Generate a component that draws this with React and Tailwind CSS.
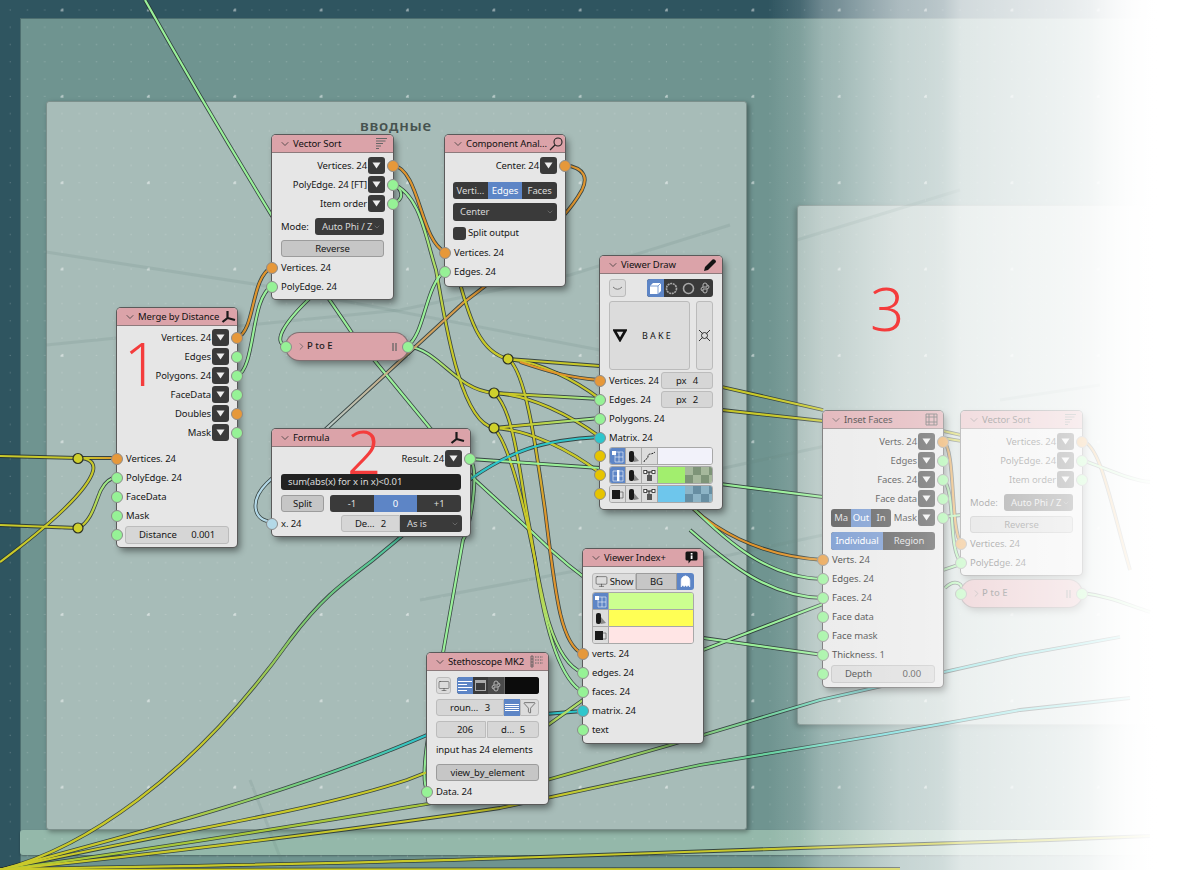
import React from 'react';
import { Monitor, Filter, Ghost, ChevronDown, ChevronRight } from 'lucide-react';

// Wire stroke colours
const G = '#9af09a';
const Y = '#c9c92a';
const O = '#e0952e';
const C = '#2fc4c8';

const wires = [
  // left side
  { d: 'M0,456 L78,458', c: Y },
  { d: 'M78,458 L117,458', c: 'url(#yo1)' },
  { d: 'M78,458 C90,458 95,463 93,471 C88,490 50,525 0,562', c: Y },
  { d: 'M0,525 L78,528', c: Y },
  { d: 'M78,528 C92,522 96,500 101,490 C105,482 110,478 117,477', c: 'url(#yg1)' },
  // merge -> vector sort
  { d: 'M237,338 C256,330 250,278 272,267', c: O },
  { d: 'M237,376 C256,368 250,298 272,286', c: G },
  // long green from the top
  { d: 'M145,0 C190,80 250,180 272,216 C300,258 330,300 352,333 L430,428 L473,478 L533,533 C570,570 640,625 703,638 L823,655', c: G },
  // vector sort outs
  { d: 'M393,203 C404,200 404,190 393,184', c: G },
  { d: 'M286,346 C272,342 285,322 310,298 L393,203', c: G },
  { d: 'M393,165 C420,170 420,240 445,252', c: O },
  { d: 'M393,184 C420,195 425,235 436,270 C445,320 460,422 494,428', c: 'url(#gy1)' },
  { d: 'M407,346 C425,335 425,285 445,271', c: G },
  { d: 'M407,346 C440,350 455,390 494,393', c: 'url(#gy2)' },
  // component analyzer center -> formula x
  { d: 'M565,165 C585,168 588,178 582,190 C560,230 500,275 463,303 L327,428 L267,483 C250,500 252,520 272,522', c: 'url(#ob1)' },
  // yellow to reroutes
  { d: 'M459,280 C470,320 480,352 508,359', c: Y },
  { d: 'M508,359 L600,366', c: Y },
  { d: 'M508,359 C540,362 575,380 600,399', c: Y },
  { d: 'M520,362 C550,372 570,378 600,380', c: O },
  { d: 'M508,359 C525,370 535,440 545,510 C555,590 560,645 583,654', c: 'url(#yo2)' },
  { d: 'M494,393 L600,399', c: 'url(#yg2)' },
  { d: 'M494,393 C530,395 570,415 600,437', c: Y },
  { d: 'M494,393 C515,410 520,480 530,530 C540,590 550,660 583,673', c: 'url(#yg3)' },
  { d: 'M494,428 L600,418', c: 'url(#yg2)' },
  { d: 'M494,428 C530,430 570,450 600,473', c: Y },
  { d: 'M494,428 C510,445 525,510 535,560 C545,630 560,680 583,692', c: 'url(#yg3)' },
  // formula result
  { d: 'M470,459 L600,468', c: G },
  { d: 'M470,459 C480,470 470,530 463,540 L443,653 C435,700 418,775 427,790', c: G },
  // fan from the lower left
  { d: 'M0,870 C80,850 190,780 290,640 C320,600 340,585 373,560 L472,478 C510,452 540,440 600,437', c: 'url(#yc1)' },
  { d: 'M0,870 C150,830 300,790 427,735 L520,716 L583,711', c: 'url(#yc2)' },
  { d: 'M0,870 C150,835 300,815 407,780 L548,725 L583,700 L703,650 L823,604', c: 'url(#yg4)' },
  { d: 'M0,870 C150,850 300,825 427,804 L547,780 L670,745 L820,700 L1020,655 L1120,637', c: 'url(#yc3)' },
  { d: 'M0,870 C150,855 350,830 500,808 L700,765 L880,735 L1020,710 L1130,698', c: 'url(#yc4)' },
  { d: 'M0,869 C200,866 400,862 540,857 L800,848 L1050,840 L1150,836', c: Y },
  { d: 'M0,870 L900,869', c: Y },
  // viewer draw -> inset faces
  { d: 'M640,350 L722,387 L823,410', c: Y },
  { d: 'M640,400 L722,410 L823,421', c: Y },
  { d: 'M640,476 L720,484 L823,497', c: G },
  { d: 'M680,495 C710,530 760,556 823,560', c: O },
  { d: 'M690,505 C730,545 770,578 823,579', c: G },
  { d: 'M690,530 C730,565 770,597 823,598', c: G },
  // inset faces -> faded vector sort
  { d: 'M943,441 C956,448 950,530 961,543', c: O },
  { d: 'M943,479 C956,490 948,550 961,562', c: G },
  { d: 'M943,431 L961,435', c: Y },
  { d: 'M943,438 L961,441', c: Y },
  { d: 'M943,517 L961,515', c: G },
  { d: 'M943,570 L961,564', c: G },
  { d: 'M945,588 C955,578 965,584 961,592', c: G },
  { d: 'M1082,593 C1110,596 1130,606 1150,612', c: G },
  { d: 'M1082,441 C1100,444 1110,500 1130,570', c: O },
  { d: 'M1082,460 C1110,470 1130,480 1150,482', c: G },
];

// Faint old wires lying on the frames
const ghosts = [
  'M46,252 L260,285 L600,350',
  'M46,345 L400,310 L570,275 L730,225',
  'M420,600 L580,570 L730,555 L823,535',
  'M250,780 L285,870',
  'M600,490 L715,470 L830,445',
  'M1000,400 L1100,385',
  'M797,240 L960,190',
];

const Sock = ({ c = 'g', side = 'l' }) => {
  const colors = {
    g: 'bg-[#96f296]',
    o: 'bg-[#e6983a]',
    c: 'bg-[#2fc6cc]',
    y: 'bg-[#e6c400]',
    b: 'bg-[#b4d9e8]',
  };
  const pos = side === 'l' ? 'left-[-6px]' : 'right-[-6px]';
  return <span className={`absolute top-[3.5px] z-10 w-[12px] h-[12px] rounded-full border border-[#8c8c8c] ${pos} ${colors[c]}`} />;
};

const Drop = () => (
  <span className="w-[17px] h-[17px] rounded-[3px] bg-[#3a3a3a] flex items-center justify-center shrink-0">
    <svg width="9" height="7" viewBox="0 0 9 7"><path d="M0.5 0.5 H8.5 L4.5 6.5 Z" fill="#eee" /></svg>
  </span>
);

const Out = ({ label, c = 'g', drop = true }) => (
  <div className="relative h-[19px] flex items-center justify-end gap-[1px] pr-2">
    <span>{label}</span>
    {drop && <Drop />}
    <Sock c={c} side="r" />
  </div>
);

const In = ({ label, c = 'g' }) => (
  <div className="relative h-[19px] flex items-center pl-[9px]">
    <Sock c={c} />
    <span>{label}</span>
  </div>
);

const Node = ({ pos, title, icon, children }) => (
  <div className={`absolute isolate ${pos} bg-[#e6e6e6] rounded-[4px] ring-1 ring-[#5a5a5a] shadow-[3px_4px_7px_rgba(0,0,0,0.45)] text-[9.5px] tracking-[-0.1px] leading-none whitespace-nowrap text-[#161616]`}>
    <div className="h-[18px] bg-[#dba3a9] border-b border-[#8d7a7c] rounded-t-[4px] flex items-center pl-[7px] pr-[5px] gap-[2px] text-[#111]">
      <ChevronDown size={12} strokeWidth={1.5} className="shrink-0 text-[#333]" />
      <span className="flex-1 whitespace-nowrap">{title}</span>
      {icon}
    </div>
    <div className="pt-[1px] pb-[1px]">{children}</div>
  </div>
);

const Tripod = () => (
  <svg width="15" height="14" viewBox="0 0 15 14" className="shrink-0">
    <path d="M6.5 1 V8 L1.5 12 M6.5 8 L14 10" stroke="#1a1a1a" strokeWidth="2.2" fill="none" />
  </svg>
);

const SortIcon = () => (
  <svg width="13" height="13" viewBox="0 0 13 13" className="shrink-0">
    <path d="M1 1.5 H12 M1 4 H10.5 M1 6.5 H8 M1 9 H6 M1 11.5 H4" stroke="#666" strokeWidth="1" />
  </svg>
);

const PencilIcon = () => (
  <svg width="14" height="14" viewBox="0 0 14 14" className="shrink-0">
    <path d="M1 13 L2 9 L9.5 1.5 Q10.5 0.8 11.5 1.5 L12.8 2.8 Q13.3 3.6 12.5 4.5 L5 12 Z" fill="#141414" />
  </svg>
);

const InfoIcon = () => (
  <svg width="13" height="13" viewBox="0 0 13 13" className="shrink-0">
    <path d="M2 0.5 H11 Q12.5 0.5 12.5 2 V8 Q12.5 9.5 11 9.5 H6 L3.5 12.5 V9.5 H2 Q0.5 9.5 0.5 8 V2 Q0.5 0.5 2 0.5 Z" fill="#141414" />
    <rect x="5.7" y="2" width="1.8" height="1.6" fill="#fff" />
    <rect x="5.7" y="4.4" width="1.8" height="3.6" fill="#fff" />
  </svg>
);

const ScopeIcon = () => (
  <svg width="13" height="13" viewBox="0 0 13 13" className="shrink-0">
    <path d="M1 1 H3 V12 H1 Z" stroke="#555" strokeWidth="0.8" fill="none" />
    <path d="M1 4 H3 M1 7 H3 M1 10 H3" stroke="#555" strokeWidth="0.8" />
    <path d="M5 2 H13 M5 5 H13 M5 8 H13" stroke="#666" strokeWidth="1" strokeDasharray="1.5 1" />
  </svg>
);

const InsetIcon = () => (
  <svg width="13" height="13" viewBox="0 0 13 13" className="shrink-0">
    <path d="M1 1 H12 V12 H1 Z M4 1 V12 M9 1 V12 M1 4 H12 M1 9 H12" stroke="#4a4a4a" strokeWidth="0.9" fill="none" />
  </svg>
);

const LensIcon = () => (
  <svg width="14" height="14" viewBox="0 0 14 14" className="shrink-0">
    <circle cx="9" cy="5" r="4" stroke="#222" strokeWidth="1.1" fill="none" />
    <path d="M6 8 L1 13" stroke="#222" strokeWidth="1.3" />
  </svg>
);

const DarkSeg = ({ items, active, className }) => (
  <div className={`flex rounded-[3px] overflow-hidden bg-[#3a3a3a] text-[#dcdcdc] ${className}`}>
    {items.map((t, i) => (
      <span key={t} className={`flex-1 flex items-center justify-center whitespace-nowrap ${i === active ? 'bg-[#5d85c6] text-white' : ''}`}>{t}</span>
    ))}
  </div>
);

const DarkSelect = ({ label, className }) => (
  <div className={`flex items-center justify-between rounded-[3px] bg-[#3a3a3a] text-[#d8d8d8] pl-[7px] pr-[3px] ${className}`}>
    <span className="whitespace-nowrap">{label}</span>
    <ChevronDown size={8} strokeWidth={1.2} className="text-[#aaa] shrink-0" />
  </div>
);

const VectorSort = ({ pos, poly }) => (
  <Node pos={pos} title="Vector Sort" icon={<SortIcon />}>
    <div className="pt-[2px]">
      <Out label="Vertices. 24" c="o" />
      <Out label={poly} />
      <Out label="Item order" />
      <div className="flex items-center h-[17px] mt-[5px] px-[9px] justify-between">
        <span>Mode:</span>
        <DarkSelect label="Auto Phi / Z" className="w-[69px] h-[17px]" />
      </div>
      <div className="mx-[9px] mt-[5px] h-[17px] rounded-[3px] bg-[#c6c6c6] border border-[#9c9c9c] flex items-center justify-center">Reverse</div>
      <div className="mt-[1px] pb-[2px]">
        <In label="Vertices. 24" c="o" />
        <In label="PolyEdge. 24" />
      </div>
    </div>
  </Node>
);

const Pill = ({ pos }) => (
  <div className={`absolute isolate ${pos} h-[27px] rounded-[14px] bg-[#dba3a9] ring-1 ring-[#7f6f71] shadow-[3px_4px_7px_rgba(0,0,0,0.4)] flex items-center pl-[10px] pr-[11px] text-[9.5px] font-medium text-[#1c1c1c]`}>
    <span className="absolute left-[-6px] top-[7.5px] z-10 w-[12px] h-[12px] rounded-full border border-[#8c8c8c] bg-[#96f296]" />
    <ChevronRight size={11} strokeWidth={1.5} className="text-[#555]" />
    <span className="flex-1">P to E</span>
    <span className="flex gap-[1px]">
      <i className="w-[2px] h-[8px] bg-[#8f7a7c]" />
      <i className="w-[2px] h-[8px] bg-[#8f7a7c]" />
    </span>
    <span className="absolute right-[-6px] top-[7.5px] z-10 w-[12px] h-[12px] rounded-full border border-[#8c8c8c] bg-[#96f296]" />
  </div>
);

const Field = ({ a, b, className }) => (
  <div className={`flex items-center justify-between rounded-[3px] bg-[#d6d6d6] border border-[#bcbcbc] ${className}`}>
    <span>{a}</span>
    <span>{b}</span>
  </div>
);

const Cell = ({ active, children }) => (
  <span className={`w-[16px] shrink-0 flex items-center justify-center border-r border-[#a8a8a8] ${active ? 'bg-[#5d85c6]' : 'bg-[#dcdcdc]'}`}>
    {children}
  </span>
);

const VertGlyph = ({ fg = '#fff' }) => (
  <svg width="13" height="13" viewBox="0 0 13 13">
    <path d="M4 2 H12 V12 H4 Z M4 7 H12 M8 2 V12" stroke={fg} strokeWidth="0.8" fill="none" opacity="0.7" />
    <rect x="1" y="1" width="4" height="4" fill={fg} />
  </svg>
);
const EdgeGlyph = () => (
  <svg width="13" height="13" viewBox="0 0 13 13">
    <path d="M2 2 H12 V12 H2 Z M2 7 H12" stroke="#fff" strokeWidth="0.8" fill="none" opacity="0.7" />
    <rect x="6" y="1" width="2.4" height="11" fill="#fff" />
  </svg>
);
const FaceGlyph = () => (
  <svg width="13" height="13" viewBox="0 0 13 13">
    <rect x="1" y="2" width="8" height="9" fill="#1a1a1a" />
    <path d="M9 4 H12 V10 H9" stroke="#666" strokeWidth="0.8" fill="none" />
  </svg>
);
const PaintGlyph = () => (
  <svg width="13" height="13" viewBox="0 0 13 13">
    <rect x="2" y="1" width="5" height="11" rx="2" fill="#1a1a1a" />
    <path d="M7 5 L12 11 L7 12 Z" fill="#888" />
  </svg>
);
const CurveGlyph = () => (
  <svg width="13" height="13" viewBox="0 0 13 13">
    <path d="M1 12 C2 8 5 10 5 6 C5 3 9 5 12 2" stroke="#222" strokeWidth="1" strokeDasharray="2 1" fill="none" />
  </svg>
);
const TreeGlyph = () => (
  <svg width="13" height="13" viewBox="0 0 13 13">
    <path d="M2 3 H11 M6 3 V12" stroke="#222" strokeWidth="1" fill="none" />
    <rect x="0.8" y="1.5" width="3" height="3" fill="#fff" stroke="#222" strokeWidth="0.8" />
    <rect x="9" y="1.5" width="3" height="3" fill="#fff" stroke="#222" strokeWidth="0.8" />
    <rect x="4" y="6" width="5" height="6" fill="#555" />
  </svg>
);
const PyGlyph = () => (
  <svg width="12" height="12" viewBox="0 0 12 12">
    <path d="M4 5 V3 Q4 1 6 1 Q8 1 8 3 V5 H5 Q2 5 2 7 Q2 9 4 9 M8 7 V9 Q8 11 6 11 Q4 11 4 9 V7 H7 Q10 7 10 5 Q10 3 8 3" stroke="#b5b5b5" strokeWidth="1" fill="none" />
  </svg>
);
const Ring = ({ dash }) => (
  <svg width="13" height="13" viewBox="0 0 13 13">
    <circle cx="6.5" cy="6.5" r="5" stroke="#a8a8a8" strokeWidth="1.6" fill="none" strokeDasharray={dash} />
  </svg>
);

const ColorRow = ({ first, middle, last, children }) => (
  <div className="relative h-[18px] mx-[9px] flex rounded-[3px] overflow-hidden border border-[#a8a8a8]">
    <Cell active={first[1]}>{first[0]}</Cell>
    <Cell>{middle}</Cell>
    <Cell>{last}</Cell>
    {children}
  </div>
);

const SideSock = ({ c, t }) => <span className={`absolute left-[-6px] ${t} z-10 w-[12px] h-[12px] rounded-full border border-[#8c8c8c] ${c}`} />;

const ViewerDraw = () => (
  <Node pos="left-[600px] top-[256px] w-[122px]" title="Viewer Draw" icon={<PencilIcon />}>
    <div className="px-[9px] pt-[4px] flex justify-between items-start">
      <span className="w-[17px] h-[18px] rounded-[3px] bg-[#dcdcdc] border border-[#bbb] flex items-center justify-center">
        <svg width="11" height="5" viewBox="0 0 11 5"><path d="M1 1 Q5.5 5.5 10 1" stroke="#777" strokeWidth="1" fill="none" /></svg>
      </span>
      <div className="flex w-[66px] h-[18px] rounded-[3px] overflow-hidden bg-[#3a3a3a]">
        <span className="flex-1 bg-[#5d85c6] flex items-center justify-center">
          <svg width="13" height="13" viewBox="0 0 13 13">
            <path d="M1 4 L4 1 H12 V9 L9 12 H1 Z" fill="#fff" />
            <path d="M9 4 V12 M9 4 H1 M9 4 L12 1" stroke="#5d85c6" strokeWidth="0.8" />
          </svg>
        </span>
        <span className="flex-1 flex items-center justify-center"><Ring dash="2 0.7" /></span>
        <span className="flex-1 flex items-center justify-center"><Ring /></span>
        <span className="flex-1 flex items-center justify-center"><PyGlyph /></span>
      </div>
    </div>
    <div className="px-[9px] pt-[4px] flex justify-between">
      <div className="w-[81px] h-[69px] rounded-[3px] bg-[#dcdcdc] border border-[#bbb] flex items-center">
        <svg width="14" height="13" viewBox="0 0 14 13" className="ml-[3px]"><path d="M1.5 1.5 H12.5 L7 11 Z" stroke="#111" strokeWidth="2.6" fill="none" /></svg>
        <span className="ml-[15px] tracking-[2.2px] text-[9px]">BAKE</span>
      </div>
      <div className="w-[17px] h-[69px] rounded-[3px] bg-[#dcdcdc] border border-[#bbb] flex items-center justify-center">
        <svg width="13" height="13" viewBox="0 0 13 13">
          <circle cx="6.5" cy="6.5" r="3" stroke="#222" fill="none" strokeWidth="0.9" />
          <path d="M1 1 L4.5 4.5 M12 1 L8.5 4.5 M1 12 L4.5 8.5 M12 12 L8.5 8.5" stroke="#222" strokeWidth="0.9" />
        </svg>
      </div>
    </div>
    <div className="pt-[1px]">
      <div className="relative h-[19px] flex items-center pl-[9px] justify-between pr-[9px]">
        <Sock c="o" />
        <span>Vertices. 24</span>
        <Field a="px" b="4" className="w-[52px] h-[17px] px-[14px]" />
      </div>
      <div className="relative h-[19px] flex items-center pl-[9px] justify-between pr-[9px]">
        <Sock />
        <span>Edges. 24</span>
        <Field a="px" b="2" className="w-[52px] h-[17px] px-[14px]" />
      </div>
      <In label="Polygons. 24" />
      <In label="Matrix. 24" c="c" />
    </div>
    <div className="relative flex flex-col gap-[1px] pb-[5px]">
      <SideSock c="bg-[#e6c400]" t="top-[3px]" />
      <SideSock c="bg-[#e6c400]" t="top-[22px]" />
      <SideSock c="bg-[#e6c400]" t="top-[41px]" />
      <ColorRow first={[<VertGlyph key="v" />, true]} middle={<PaintGlyph />} last={<CurveGlyph />}>
        <span className="flex-1 bg-[#f2f2fa]" />
      </ColorRow>
      <ColorRow first={[<EdgeGlyph key="e" />, true]} middle={<PaintGlyph />} last={<TreeGlyph />}>
        <span className="w-[27px] bg-[#a2ee6e]" />
        <span className="flex-1 bg-[#a6b89c] bg-[linear-gradient(45deg,#7e9478_25%,transparent_25%,transparent_75%,#7e9478_75%),linear-gradient(45deg,#7e9478_25%,transparent_25%,transparent_75%,#7e9478_75%)] bg-[size:16px_16px] bg-[position:0_0,8px_8px]" />
      </ColorRow>
      <ColorRow first={[<FaceGlyph key="f" />, false]} middle={<PaintGlyph />} last={<TreeGlyph />}>
        <span className="w-[27px] bg-[#6ec6ec]" />
        <span className="flex-1 bg-[#8db4c6] bg-[linear-gradient(45deg,#678ea2_25%,transparent_25%,transparent_75%,#678ea2_75%),linear-gradient(45deg,#678ea2_25%,transparent_25%,transparent_75%,#678ea2_75%)] bg-[size:16px_16px] bg-[position:0_0,8px_8px]" />
      </ColorRow>
    </div>
  </Node>
);

const ViewerIndex = () => (
  <Node pos="left-[583px] top-[549px] w-[120px]" title="Viewer Index+" icon={<InfoIcon />}>
    <div className="mx-[9px] mt-[5px] h-[17px] flex">
      <span className="w-[44px] rounded-l-[3px] bg-[#dcdcdc] border border-[#bbb] flex items-center justify-center gap-[2px]">
        <Monitor size={13} strokeWidth={1} className="text-[#333]" />Show
      </span>
      <span className="flex-1 bg-[#c6c6c6] border border-[#9c9c9c] flex items-center justify-center">BG</span>
      <span className="w-[17px] bg-[#5d85c6] rounded-r-[3px] flex items-center justify-center">
        <Ghost size={13} strokeWidth={1.2} className="text-white fill-white" />
      </span>
    </div>
    <div className="mx-[9px] mt-[2px] h-[52px] flex flex-col rounded-[3px] overflow-hidden border border-[#a8a8a8]">
      <div className="flex flex-1 border-b border-[#a8a8a8]">
        <Cell active><VertGlyph /></Cell>
        <span className="flex-1 bg-[#ccff90]" />
      </div>
      <div className="flex flex-1 border-b border-[#a8a8a8]">
        <Cell><PaintGlyph /></Cell>
        <span className="flex-1 bg-[#ffff55]" />
      </div>
      <div className="flex flex-1">
        <Cell><FaceGlyph /></Cell>
        <span className="flex-1 bg-[#ffe5e5]" />
      </div>
    </div>
    <div className="pb-[3px]">
      <In label="verts. 24" c="o" />
      <In label="edges. 24" />
      <In label="faces. 24" />
      <In label="matrix. 24" c="c" />
      <In label="text" />
    </div>
  </Node>
);

const Stethoscope = () => (
  <Node pos="left-[427px] top-[653px] w-[121px]" title="Stethoscope MK2" icon={<ScopeIcon />}>
    <div className="px-[9px] pt-[5px] flex justify-between h-[23px]">
      <span className="w-[15px] h-[17px] rounded-[3px] bg-[#dcdcdc] border border-[#bbb] flex items-center justify-center">
        <Monitor size={12} strokeWidth={1} className="text-[#333]" />
      </span>
      <div className="w-[82px] h-[17px] flex rounded-[3px] overflow-hidden bg-[#3a3a3a]">
        <span className="w-[16px] bg-[#5d85c6] flex flex-col justify-center gap-[2px] px-[1px]">
          <i className="h-[1px] bg-white" /><i className="h-[1px] bg-white w-[9px]" /><i className="h-[1px] bg-white" /><i className="h-[1px] bg-white w-[9px]" />
        </span>
        <span className="w-[15px] flex items-center justify-center">
          <span className="w-[11px] h-[11px] border border-[#aaa] border-t-[3px]" />
        </span>
        <span className="w-[16px] flex items-center justify-center bg-[#4a4a4a]"><PyGlyph /></span>
        <span className="flex-1 bg-[#0c0c0c] border-l border-[#666]" />
      </div>
    </div>
    <div className="mx-[9px] mt-[4px] h-[17px] flex">
      <Field a="roun..." b="3" className="flex-1 px-[13px] rounded-r-none" />
      <span className="w-[16px] bg-[#5d85c6] flex flex-col justify-center gap-[1px] px-[1px]">
        <i className="h-[1px] bg-white" /><i className="h-[1px] bg-white" /><i className="h-[1px] bg-white" /><i className="h-[1px] bg-white" />
      </span>
      <span className="w-[19px] rounded-r-[3px] bg-[#dcdcdc] border border-[#bbb] flex items-center justify-center">
        <Filter size={13} strokeWidth={1} className="text-[#222]" />
      </span>
    </div>
    <div className="mx-[9px] mt-[5px] h-[17px] flex gap-[1px]">
      <Field a="" b="206" className="w-[50px] pr-[12px] rounded-r-none" />
      <Field a="d..." b="5" className="flex-1 px-[13px] rounded-l-none" />
    </div>
    <div className="px-[9px] mt-[7px] h-[10px] flex items-center whitespace-nowrap">input has 24 elements</div>
    <div className="mx-[9px] mt-[9px] h-[17px] rounded-[3px] bg-[#c6c6c6] border border-[#9c9c9c] flex items-center justify-center">view_by_element</div>
    <div className="pt-[1px] pb-[2px]"><In label="Data. 24" /></div>
  </Node>
);

const InsetFaces = () => (
  <Node pos="left-[823px] top-[411px] w-[120px]" title="Inset Faces" icon={<InsetIcon />}>
    <div className="pt-[2px]">
      <Out label="Verts. 24" c="o" />
      <Out label="Edges" />
      <Out label="Faces. 24" />
      <Out label="Face data" />
      <div className="relative h-[19px] flex items-center justify-between pl-[8px] pr-2">
        <DarkSeg items={['Ma', 'Out', 'In']} active={1} className="w-[60px] h-[18px]" />
        <span className="flex items-center gap-[1px]">Mask<Drop /></span>
        <Sock side="r" />
      </div>
      <DarkSeg items={['Individual', 'Region']} active={0} className="mx-[8px] mt-[5px] h-[18px]" />
      <div className="pb-[3px]">
        <In label="Verts. 24" c="o" />
        <In label="Edges. 24" />
        <In label="Faces. 24" />
        <In label="Face data" />
        <In label="Face mask" />
        <In label="Thickness. 1" />
        <div className="relative h-[19px] flex items-center pl-[8px] pr-[8px]">
          <Sock />
          <Field a="Depth" b="0.00" className="w-full h-[18px] px-[13px]" />
        </div>
      </div>
    </div>
  </Node>
);

const Canvas = () => (
  <div className="relative w-[1201px] h-[870px] overflow-hidden bg-[#2f5560] font-['Noto_Sans',sans-serif]">
    {/* frames */}
    <div className="absolute left-[20px] top-[18px] w-[1181px] h-[852px] bg-[#6f9490] border-t border-l border-[#4e6f70]" />
    <div className="absolute left-[20px] top-[830px] w-[1181px] h-[25px] bg-[#94b8aa] rounded-[3px] shadow-[0_1px_2px_rgba(0,0,0,0.3)]" />
    <div className="absolute left-[46px] top-[101px] w-[701px] h-[729px] bg-[#a7bcb8] rounded-[3px] border border-[#7c908c] shadow-[2px_2px_5px_rgba(0,0,0,0.35)]" />
    <div className="absolute left-[797px] top-[205px] w-[404px] h-[520px] bg-[#a7bcb8] rounded-[3px] border border-[#7c908c] shadow-[-2px_2px_5px_rgba(0,0,0,0.25)]" />
    <div className="absolute left-[360px] top-[116px] text-[15px] leading-[18px] font-semibold tracking-[0.8px] text-[#46524f]">вводные</div>

    {/* dot grid and wires */}
    <svg className="absolute inset-0" width="1201" height="870" fill="none">
      <defs>
        <pattern id="dots" x="61.5" y="9.5" width="86.35" height="86.35" patternUnits="userSpaceOnUse">
          {[0, 1, 2, 3, 4].map((i) =>
            [0, 1, 2, 3, 4].map((j) => (
              <rect key={`${i}-${j}`} x={i * 17.27} y={j * 17.27} width="1" height="1" fill="#fff" opacity="0.28" />
            ))
          )}
          <rect x="-1" y="-1" width="3" height="3" fill="#fff" opacity="0.4" />
          <rect x="85.35" y="-1" width="2" height="3" fill="#fff" opacity="0.4" />
          <rect x="-1" y="85.35" width="3" height="2" fill="#fff" opacity="0.4" />
        </pattern>
        <linearGradient id="yo1" gradientUnits="userSpaceOnUse" x1="85" y1="0" x2="117" y2="0"><stop stopColor={Y} /><stop offset="1" stopColor={O} /></linearGradient>
        <linearGradient id="yg1" gradientUnits="userSpaceOnUse" x1="85" y1="525" x2="115" y2="478"><stop stopColor={Y} /><stop offset="1" stopColor={G} /></linearGradient>
        <linearGradient id="gy1" gradientUnits="userSpaceOnUse" x1="0" y1="210" x2="0" y2="330"><stop stopColor={G} /><stop offset="1" stopColor={Y} /></linearGradient>
        <linearGradient id="gy2" gradientUnits="userSpaceOnUse" x1="425" y1="0" x2="470" y2="0"><stop stopColor={G} /><stop offset="1" stopColor={Y} /></linearGradient>
        <linearGradient id="ob1" gradientUnits="userSpaceOnUse" x1="480" y1="280" x2="300" y2="460"><stop stopColor={O} /><stop offset="0.45" stopColor="#c8a97c" /><stop offset="1" stopColor="#b4d9e8" /></linearGradient>
        <linearGradient id="yo2" gradientUnits="userSpaceOnUse" x1="0" y1="420" x2="0" y2="520"><stop stopColor={Y} /><stop offset="1" stopColor={O} /></linearGradient>
        <linearGradient id="yg2" gradientUnits="userSpaceOnUse" x1="520" y1="0" x2="600" y2="0"><stop stopColor={Y} /><stop offset="1" stopColor={G} /></linearGradient>
        <linearGradient id="yg3" gradientUnits="userSpaceOnUse" x1="0" y1="560" x2="0" y2="660"><stop stopColor={Y} /><stop offset="1" stopColor={G} /></linearGradient>
        <linearGradient id="yc1" gradientUnits="userSpaceOnUse" x1="200" y1="750" x2="480" y2="470"><stop stopColor={Y} /><stop offset="0.6" stopColor="#5fc890" /><stop offset="1" stopColor={C} /></linearGradient>
        <linearGradient id="yc2" gradientUnits="userSpaceOnUse" x1="150" y1="0" x2="420" y2="0"><stop stopColor={Y} /><stop offset="0.6" stopColor="#6fd08a" /><stop offset="1" stopColor={C} /></linearGradient>
        <linearGradient id="yg4" gradientUnits="userSpaceOnUse" x1="400" y1="0" x2="720" y2="0"><stop stopColor={Y} /><stop offset="1" stopColor={G} /></linearGradient>
        <linearGradient id="yc3" gradientUnits="userSpaceOnUse" x1="560" y1="0" x2="880" y2="0"><stop stopColor="#a8c83a" /><stop offset="1" stopColor="#5fd8d8" /></linearGradient>
        <linearGradient id="yc4" gradientUnits="userSpaceOnUse" x1="560" y1="0" x2="880" y2="0"><stop stopColor={Y} /><stop offset="0.5" stopColor="#6fd08a" /><stop offset="1" stopColor="#5fd8d8" /></linearGradient>
      </defs>
      <rect width="1201" height="870" fill="url(#dots)" />
    </svg>

    {/* background fade sits under wires and nodes */}
    <div className="absolute inset-0 bg-[linear-gradient(90deg,rgba(255,255,255,0)_768px,rgba(255,255,255,0.02)_800px,rgba(255,255,255,0.11)_840px,rgba(255,255,255,0.36)_900px,rgba(255,255,255,0.4)_960px,rgba(255,255,255,0.44)_1020px,rgba(255,255,255,0.47)_1090px,rgba(255,255,255,1)_1160px)]" />

    <svg className="absolute inset-0" width="1201" height="870" fill="none">
      {ghosts.map((d) => (
        <path key={d} d={d} stroke="#64807c" strokeOpacity="0.16" strokeWidth="3" />
      ))}
      {wires.map((w) => (
        <path key={`o${w.d}`} d={w.d} stroke="#24302f" strokeOpacity="0.85" strokeWidth="3.8" />
      ))}
      {wires.map((w) => (
        <path key={`c${w.d}`} d={w.d} stroke={w.c} strokeWidth="2.2" />
      ))}
      {[[78, 458.5], [78, 528], [508, 359], [494, 393], [494, 428]].map(([x, y]) => (
        <circle key={`${x}-${y}`} cx={x} cy={y} r="5" fill="#cfd02c" stroke="#2a2f24" strokeWidth="1.2" />
      ))}
    </svg>

    {/* nodes */}
    <VectorSort pos="left-[272px] top-[135px] w-[121px]" poly="PolyEdge. 24 [FT]" />

    <Node pos="left-[445px] top-[135px] w-[120px]" title="Component Anal..." icon={<LensIcon />}>
      <div className="pt-[2px]">
        <Out label="Center. 24" c="o" />
        <DarkSeg items={['Verti...', 'Edges', 'Faces']} active={1} className="mx-[8px] mt-[7px] h-[17px]" />
        <DarkSelect label="Center" className="mx-[8px] mt-[4px] h-[18px]" />
        <div className="flex items-center gap-[2px] px-[8px] mt-[5px] h-[14px]">
          <span className="w-[13px] h-[13px] rounded-[3px] bg-[#3a3a3a]" />
          <span>Split output</span>
        </div>
        <div className="pt-[3px] pb-[4px]">
          <In label="Vertices. 24" c="o" />
          <In label="Edges. 24" />
        </div>
      </div>
    </Node>

    <Node pos="left-[117px] top-[308px] w-[120px]" title="Merge by Distance" icon={<Tripod />}>
      <div className="pt-[1px]">
        <Out label="Vertices. 24" c="o" />
        <Out label="Edges" />
        <Out label="Polygons. 24" />
        <Out label="FaceData" />
        <Out label="Doubles" c="o" />
        <Out label="Mask" />
        <div className="pt-[7px] pb-[2px]">
          <In label="Vertices. 24" c="o" />
          <In label="PolyEdge. 24" />
          <In label="FaceData" />
          <In label="Mask" />
          <div className="relative h-[19px] flex items-center pl-[8px] pr-[8px]">
            <Sock />
            <Field a="Distance" b="0.001" className="w-full h-[18px] px-[13px]" />
          </div>
        </div>
      </div>
    </Node>

    <Node pos="left-[272px] top-[429px] w-[198px]" title="Formula" icon={<Tripod />}>
      <div className="pt-[1px]">
        <Out label="Result. 24" />
        <div className="mx-[9px] mt-[6px] h-[16px] rounded-[3px] bg-[#222] text-[#dcdcdc] px-[7px] flex items-center whitespace-nowrap">sum(abs(x) for x in x)&lt;0.01</div>
        <div className="mx-[9px] mt-[5px] h-[17px] flex justify-between">
          <span className="w-[43px] rounded-[3px] bg-[#c6c6c6] border border-[#9c9c9c] flex items-center justify-center">Split</span>
          <DarkSeg items={['-1', '0', '+1']} active={1} className="w-[131px]" />
        </div>
        <div className="relative h-[19px] mt-[2px] mb-[2px] flex items-center pl-[9px] pr-[8px] justify-between">
          <Sock c="b" />
          <span>x. 24</span>
          <div className="w-[121px] h-[17px] flex">
            <Field a="De..." b="2" className="w-[59px] px-[13px] rounded-r-none" />
            <DarkSelect label="As is" className="flex-1 rounded-l-none" />
          </div>
        </div>
      </div>
    </Node>

    <Pill pos="left-[286px] top-[333px] w-[122px]" />
    <ViewerDraw />
    <ViewerIndex />
    <Stethoscope />
    <InsetFaces />
    <VectorSort pos="left-[961px] top-[411px] w-[121px]" poly="PolyEdge. 24" />
    <Pill pos="left-[961px] top-[580px] w-[121px]" />

    {/* fade out to the right */}
    <div className="absolute inset-0 bg-[linear-gradient(90deg,rgba(255,255,255,0)_768px,rgba(255,255,255,0.1)_800px,rgba(255,255,255,0.25)_823px,rgba(255,255,255,0.42)_925px,rgba(255,255,255,0.47)_943px,rgba(255,255,255,0.63)_961px,rgba(255,255,255,0.78)_1065px,rgba(255,255,255,1)_1160px)]" />

    {/* painted red numbers */}
    <span className="absolute left-[124px] top-[341px] text-[60px] leading-[44px] font-light text-[#f43c3c]">1</span>
    <span className="absolute left-[347px] top-[429px] text-[60px] leading-[44px] font-light text-[#f43c3c]">2</span>
    <span className="absolute left-[870px] top-[286px] text-[60px] leading-[44px] font-light text-[#f43c3c]">3</span>
  </div>
);

export default function App() {
  return <Canvas />;
}
